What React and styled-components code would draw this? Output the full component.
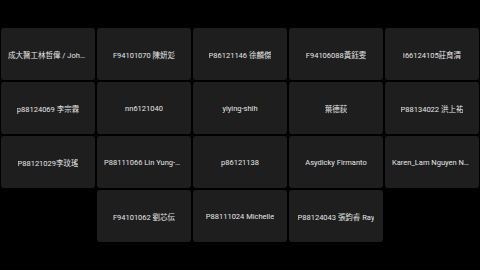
import React from "react";
import styled, { createGlobalStyle } from "styled-components";

const GlobalStyle = createGlobalStyle`
  html, body {
    margin: 0;
    padding: 0;
    background: #000;
    width: 100%;
    height: 100%;
    overflow: hidden;
  }
  #root {
    height: 100%;
  }
`;

const Stage = styled.div`
  height: 100vh;
  display: flex;
  align-items: center;
  justify-content: center;
  background: #000;
`;

const Grid = styled.div`
  width: 480px;
  box-sizing: border-box;
  padding: 0 1px;
  display: flex;
  flex-wrap: wrap;
  justify-content: center;
  gap: 2px;
`;

const Tile = styled.div`
  width: 94px;
  height: 52px;
  box-sizing: border-box;
  padding: 0 7px;
  border-radius: 3px;
  background: #1e1e1f;
  display: flex;
  align-items: center;
  justify-content: center;
  min-width: 0;
`;

const Name = styled.span`
  font-family: Roboto, "Noto Sans CJK TC", sans-serif;
  font-size: 7.5px;
  color: #e6e6e6;
  white-space: nowrap;
  overflow: hidden;
  text-overflow: ellipsis;
  max-width: 100%;
`;

const participants = [
  "成大醫工林哲偉 / John Lin",
  "F94101070 陳妍彣",
  "P86121146 徐麟傑",
  "F94106088黃鈺雯",
  "I66124105莊育清",
  "p88124069 李宗霖",
  "nn6121040",
  "yiying-shih",
  "葉德荻",
  "P88134022 洪上祐",
  "P88121029李玟瑤",
  "P88111066 Lin Yung-Chen",
  "p86121138",
  "Asydicky Firmanto",
  "Karen_Lam Nguyen Ngoc",
  "F94101062 劉芯伝",
  "P88111024 Michelle",
  "P88124043 張鈞睿 Ray",
];

export default function App() {
  return (
    <>
      <GlobalStyle />
      <Stage>
        <Grid>
          {participants.map((name, i) => (
            <Tile key={i}>
              <Name>{name}</Name>
            </Tile>
          ))}
        </Grid>
      </Stage>
    </>
  );
}
